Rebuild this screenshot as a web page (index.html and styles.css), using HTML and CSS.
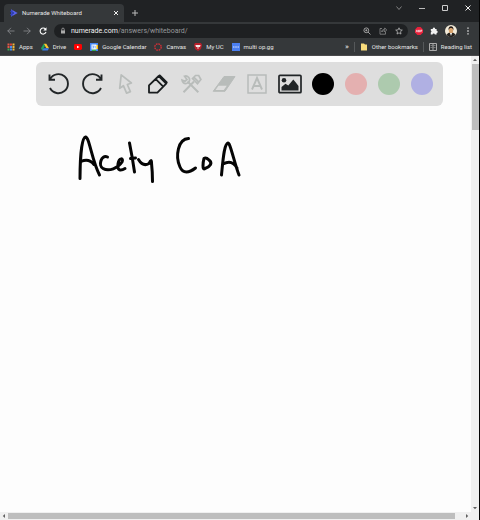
FILE: index.html
```html
<!DOCTYPE html>
<html lang="en">
<head>
<meta charset="utf-8">
<title>Numerade Whiteboard</title>
<link rel="stylesheet" href="styles.css">
</head>
<body>
<header class="browser">
  <div class="tabs">
    <div class="tab">
      <svg class="icon" viewBox="0 0 8 8"><path d="M1 .3 7.7 4 1 7.7Z" fill="#5963e8"/><path d="M0 2.2 4 4 0 5.8M2 1v6" stroke="#2b3cae" fill="none"/></svg>
      <span class="tab-title">Numerade Whiteboard</span>
      <button class="plain" aria-label="Close tab"><svg class="icon" viewBox="0 0 8 8"><path d="m2 2 4 4m0-4-4 4" stroke="#eee" fill="none"/></svg></button>
    </div>
    <button class="plain" aria-label="New tab"><svg class="icon" viewBox="0 0 8 8"><path d="M1 4h6M4 1v6" stroke="#bbb" fill="none"/></svg></button>
    <div class="window-buttons">
      <button class="plain" aria-label="Search tabs"><svg class="icon" viewBox="0 0 8 8"><path d="m1.5 2.5 2.5 3 2.5-3" stroke="#999" stroke-width=".8" fill="none"/></svg></button>
      <button class="plain" aria-label="Minimize"><svg class="icon" viewBox="0 0 8 8"><path d="M1 4.5h6" stroke="#bbb"/></svg></button>
      <button class="plain" aria-label="Maximize"><svg class="icon" viewBox="0 0 8 8"><path d="M1.500 1.500h5v5h-5z" stroke="#ccc" fill="none"/></svg></button>
      <button class="plain" aria-label="Close"><svg class="icon" viewBox="0 0 8 8"><path d="m1.500 1.500 5 5m0-5-5 5" stroke="#eee" fill="none"/></svg></button>
    </div>
  </div>
  <div class="navigation">
    <div class="nav-buttons">
      <button class="plain" aria-label="Back"><svg class="icon" viewBox="0 0 8 8"><path d="M7.500 4h-7M4 .8.8 4 4 7.200" stroke="#8b8d90" stroke-width=".8" fill="none"/></svg></button>
      <button class="plain" aria-label="Forward"><svg class="icon" viewBox="0 0 8 8"><path d="M.5 4h7M4 .8 7.200 4 4 7.200" stroke="#8b8d90" stroke-width=".8" fill="none"/></svg></button>
      <button class="plain" aria-label="Reload"><svg class="icon" viewBox="0 0 8 8"><path d="M6.500 2.200A3 3 0 1 0 7 5" stroke="#fff" stroke-width="1.100" fill="none"/><path d="M7.500.3v3.200H4.300z" fill="#fff"/></svg></button>
    </div>
    <div class="address">
      <svg class="lock" viewBox="0 0 6 8"><path d="M1 3.500h4v3H1z" fill="#aaa"/><path d="M1.800 4V2.300a1.200 1.200 0 0 1 2.400 0V4" stroke="#aaa" stroke-width=".8" fill="none"/></svg>
      <span class="url"><b>numerade.com</b>/answers/whiteboard/</span>
      <button class="plain" aria-label="Zoom"><svg class="icon" viewBox="0 0 8 8"><circle cx="3.300" cy="3.300" r="2.400" stroke="#bbb" stroke-width=".8" fill="none"/><path d="m5 5 2.500 2.500M2.300 3.300h2m-1-1v2" stroke="#bbb" stroke-width=".8"/></svg></button>
      <button class="plain" aria-label="Share"><svg class="icon" viewBox="0 0 8 8"><path d="M3 1.500H1v5.700h5.500V5M2.700 5c0-2 1.300-2.600 3-2.600V.9l2 2.100-2 2V3.700c-1.300 0-2.200.2-3 1.300Z" stroke="#999" stroke-width=".7" fill="none"/></svg></button>
      <button class="plain" aria-label="Bookmark"><svg class="icon" viewBox="0 0 8 8"><path d="m4 .8.9 2.100 2.400.2-1.800 1.600.5 2.400-2-1.300L2 7.100l.5-2.400L.7 3.100l2.400-.2Z" stroke="#ccc" stroke-width=".7" fill="none"/></svg></button>
    </div>
    <div class="extensions">
      <button class="plain" aria-label="Ad blocker"><svg class="icon" viewBox="0 0 8 8"><path d="M2.400 0h3.200L8 2.400v3.200L5.600 8H2.400L0 5.600V2.400Z" fill="#e8213b"/><path d="m1.200 5.200.7-2.300.7 2.300M3.500 3v2h1V3.200h-1M5.700 5.200V3h1v1.200h-1" stroke="#fff" stroke-width=".6" fill="none"/></svg></button>
      <button class="plain" aria-label="Extensions"><svg class="icon" viewBox="0 0 8 8"><path d="M.8 2h2a1.200 1.200 0 1 1 2.300 0h1.500v1.800a1.100 1.100 0 1 1 0 2.200v1.500H4.800a1.100 1.100 0 0 0-2.200 0H.8V5.600a1.100 1.100 0 0 0 0-2Z" fill="#f1f1f1"/></svg></button>
      <button class="plain" aria-label="Profile"><svg class="avatar" viewBox="0 0 12 12"><circle cx="6" cy="6" r="6" fill="#f2ead8"/><path d="M1.500 10.100C2.500 8 4 7.500 6 7.500s3.500.5 4.500 2.600A6 6 0 0 1 1.500 10.100Z" fill="#25221f"/><ellipse cx="6" cy="5.400" rx="2.100" ry="2.900" fill="#d9a36c"/><path d="M3.500 5.400C3.200 2.400 4.400 1.200 6 1.200s2.800 1.200 2.500 4.200C8 3.400 7 3 6 3s-2 .4-2.500 2.400Z" fill="#251b17"/><path d="m5 8 1 3 1-3Z" fill="#fff"/></svg></button>
      <button class="plain" aria-label="Menu"><svg class="icon" viewBox="0 0 8 8"><path d="M3.300.4h1.400v1.400H3.300zm0 2.900h1.400v1.400H3.300zm0 2.900h1.400v1.400H3.300z" fill="#ddd"/></svg></button>
    </div>
  </div>
  <nav class="bookmarks">
    <a href="#"><svg class="icon" viewBox="0 0 8 8"><path d="M.5.5h2v2h-2zM.5 3h2v2h-2z" fill="#e45848"/><path d="M3 .5h2v2H3z" fill="#db4437"/><path d="M5.500.5h2v2h-2zM5.500 3h2v2h-2z" fill="#f4b83c"/><path d="M3 3h2v2H3zM3 5.500h2v2H3z" fill="#4b8df0"/><path d="M.5 5.500h2v2h-2z" fill="#3ca757"/><path d="M5.500 5.500h2v2h-2z" fill="#f4b83c"/></svg>Apps</a>
    <a href="#"><svg class="icon" viewBox="0 0 8 8"><path d="M2.700.7h2.600L8 5.300H5.400Z" fill="#fbc62e"/><path d="M2.700.7 4 3 1.300 7.600 0 5.300Z" fill="#1da462"/><path d="M2.600 5.300H8L6.700 7.600H1.300Z" fill="#397be8"/></svg>Drive</a>
    <a href="#" aria-label="YouTube"><svg class="icon" viewBox="0 0 8 8"><rect y="1" width="8" height="6" rx="1.400" fill="#f00"/><path d="m3 2.700 2.500 1.300L3 5.300Z" fill="#fff"/></svg></a>
    <a href="#"><svg class="icon" viewBox="0 0 8 8"><path d="M0 0h8v8H0z" fill="#4285f4"/><path d="M6 2h2v4H6z" fill="#fbbc04"/><path d="M2 6h4v2H2z" fill="#34a853"/><path d="M1.500 1.500h5v5h-5z" fill="#fff"/><path d="M2.400 2.800h1v1h-.6.6v1.400h-1M4.500 3h.7v2.400" stroke="#4285f4" stroke-width=".6" fill="none"/></svg>Google Calendar</a>
    <a href="#"><svg class="icon" viewBox="0 0 8 8"><circle cx="4" cy="4" r="3.200" fill="none" stroke="#dc2f36" stroke-width="1.300" stroke-dasharray="1.700 .8"/></svg>Canvas</a>
    <a href="#"><svg class="icon" viewBox="0 0 8 8"><path d="M1 0h6l1 2-1 4-3 2-3-2-1-4Z" fill="#b81f2b"/><path d="M1.400 2h5.200L6 4H2Zm1.400 2.600h2.400L4 6Z" fill="#f4e6e6"/></svg>My UC</a>
    <a href="#"><svg class="icon" viewBox="0 0 8 8"><path d="M0 0h8v8H0z" fill="#4b7ff1"/><path d="M1 4h6" stroke="#dce5ff" stroke-dasharray="1.200 .4"/></svg>multi op.gg</a>
    <div class="bookmarks-end">
      <button class="plain more" aria-label="More bookmarks">»</button>
      <a class="divided" href="#"><svg class="icon" viewBox="0 0 8 8"><path d="M1 .5h3l1 1h2v6H1z" fill="#f9dc7c"/></svg>Other bookmarks</a>
      <a class="divided" href="#"><svg class="icon" viewBox="0 0 8 8"><path d="M.5.5h7v7h-7zM4 .5v7" stroke="#aaa" fill="none"/><path d="M1.500 2.500h2m-2 2h2m1-2h2m-2 2h2" stroke="#aaa" stroke-width=".6"/></svg>Reading list</a>
    </div>
  </nav>
</header>
<main class="viewport">
  <section class="board">
    <div class="tools">
      <button class="plain" aria-label="Undo"><svg class="tool" viewBox="0 0 24 24"><path d="M2.500 2.500v5.300H8M3 7.300A9.500 9.500 0 1 1 3 16" stroke="#222628" stroke-width="1.900" fill="none"/></svg></button>
      <button class="plain" aria-label="Redo"><svg class="tool" viewBox="0 0 24 24"><path d="M21.500 2.500v5.300H16M21 7.300A9.500 9.500 0 1 0 21 16" stroke="#222628" stroke-width="1.900" fill="none"/></svg></button>
      <button class="plain" aria-label="Select"><svg class="tool" viewBox="0 0 24 24"><path d="M8.200 2.800 6.700 16.300l3.700-2.600 3.200 7.400 3.800-1.500-3.100-7.100 4.100-1.500Z" stroke="#b9bdbb" stroke-width="1.700" fill="none" stroke-linejoin="round"/></svg></button>
      <button class="plain" aria-label="Pen"><svg class="tool" viewBox="0 0 24 24"><path d="m12.700 4 7.500 7.600-8.800 9H3v-7.300ZM9.800 7.200l7.400 7.400M12.700 4l1.100-.6 7 7-.6 1.200" stroke="#181c1e" stroke-width="1.800" fill="none" stroke-linejoin="round"/></svg></button>
      <button class="plain" aria-label="Shapes"><svg class="tool" viewBox="0 0 24 24"><path d="m8.500 9.500 10.800 10.800M15 9.500 4.500 20.200" stroke="#b8bcba" stroke-width="2" fill="none"/><path d="M5.500 4.200A3.800 3.800 0 1 1 3 8l3 1.200L8 7.500ZM13.500 6.500l3-3h3.200l2.200 4-3.400 4.200Zm1.300-1.300 5 5" stroke="#b8bcba" stroke-width="1.700" fill="none"/></svg></button>
      <button class="plain" aria-label="Eraser"><svg class="tool" viewBox="0 0 24 24"><path d="M12 4.500h11L13 19.300H1.200Z" fill="#b8bcba" stroke="#b8bcba" stroke-linejoin="round"/><path d="M6.500 13.800h8.300l-3 4.200H3.500Z" fill="#dedede"/></svg></button>
      <button class="plain" aria-label="Text"><svg class="tool" viewBox="0 0 24 24"><path d="M3 3h18v18H3z" stroke="#b8bcba" stroke-width="1.500" fill="none"/><path d="m7 17.500 5-11.500 5 11.500M8.800 14h6.400" stroke="#b8bcba" stroke-width="1.900" fill="none"/></svg></button>
      <button class="plain" aria-label="Image"><svg class="tool" viewBox="0 0 24 24"><rect x="1" y="3.300" width="22" height="17.400" rx="1" stroke="#202426" stroke-width="1.700" fill="none"/><circle cx="6" cy="8.200" r="2.300" fill="#202426"/><path d="M3.500 18.500V15l4-3.200 2.800 1.800 5-6 1.900 2.100 3.300 4.200v4.600Z" fill="#202426"/></svg></button>
      <button class="swatch black" aria-label="Black"></button>
      <button class="swatch red" aria-label="Red"></button>
      <button class="swatch green" aria-label="Green"></button>
      <button class="swatch blue" aria-label="Blue"></button>
    </div>
    <svg class="drawing" viewBox="70 125 180 70" role="img" aria-label="Acety CoA">
      <path d="M80 178.500C80 165 81 138 85.500 137C89 136 92 161 99.500 175M81 161.500Q89 158 94 164.500M107.500 157C101 154 98 166 103 168.500C109 172 118 168 122 162C124 158 119 157 118 164C117 171 121 171 125 168.500M129.500 143Q132.500 158 134.500 172M130.500 158.500l5-.5M138.500 159.500Q143 167 149 163.500Q151.500 158 151.500 163Q152.500 172 152.500 181.500M188.500 138.500C178 139 175 156 180 167C183 174 189 173 195.500 168M204 158.500C203 162 202 171 205 168.500C210 167 213 163 209 160Q206 157 204 158.500M221.500 175C223 160 224 144 228 143C230 142 235 165 239 175M223 164Q232 159 237 168"/>
    </svg>
  </section>
  <div class="scroll vertical"><i class="arrow up"></i><i class="thumb"></i><i class="arrow down"></i></div>
  <div class="scroll horizontal"><i class="arrow left"></i><i class="thumb"></i><i class="arrow right"></i></div>
</main>
</body>
</html>
```
FILE: styles.css
```css
* { box-sizing: border-box; }
body {
  margin: 0;
  min-height: 100vh;
  display: flex;
  flex-direction: column;
  border-right: 1px solid #050505;
  background: #fdfdfd;
  font-family: Roboto, "Open Sans", sans-serif;
  font-size: 6px;
  line-height: 10px;
  color: #e6e6e6;
}
svg { display: block; flex: none; }
a { color: inherit; text-decoration: none; }
.plain { padding: 0; border: 0; background: none; color: inherit; font: inherit; }
.icon { width: 8px; height: 8px; }
.browser { background: #35383a; border-bottom: 1px solid #4a4a4c; }
.tabs {
  height: 22px;
  display: flex;
  align-items: center;
  gap: 7px;
  padding: 4px 0 0 4px;
  background: #202224;
}
.tab {
  width: 120px;
  height: 18px;
  display: flex;
  align-items: center;
  gap: 4px;
  padding: 0 4px 0 6px;
  border-radius: 4px 4px 0 0;
  background: #35383a;
}
.tab-title { flex: 1; }
.window-buttons { display: flex; gap: 15px; margin: -11px 7px 0 auto; }
.navigation { height: 17px; display: flex; align-items: center; }
.nav-buttons { width: 54px; display: flex; gap: 8px; padding-left: 7px; }
.address {
  flex: 1;
  height: 14px;
  display: flex;
  align-items: center;
  gap: 8px;
  padding: 0 5px 0 6px;
  border-radius: 7px;
  background: #1e2022;
  font-size: 7px;
}
.lock { width: 6px; height: 8px; }
.url { flex: 1; margin-left: -3px; color: #96989a; }
.url b { font-weight: 400; color: #f2f2f2; }
.extensions { display: flex; align-items: center; gap: 7px; padding: 0 7px; }
.avatar { width: 12px; height: 12px; }
.bookmarks { height: 16px; display: flex; align-items: center; gap: 8px; padding: 0 7px; }
.bookmarks a { display: flex; align-items: center; gap: 4px; white-space: nowrap; }
.bookmarks-end { display: flex; align-items: center; gap: 5px; margin-left: auto; }
.more { font-size: 8px; }
.bookmarks .divided { padding-left: 5px; border-left: 1px solid #55585a; }
.viewport {
  flex: 1;
  display: grid;
  grid-template: 1fr 8px / 1fr 8px;
}
.board { padding: 6px 28px 0 36px; }
.tools {
  height: 44px;
  display: grid;
  grid-template-columns: repeat(12, 1fr);
  place-items: center;
  padding: 0 5px 0 6px;
  border-radius: 6px;
  background: #dedede;
}
.tool { width: 24px; height: 24px; }
.swatch { width: 22px; height: 22px; padding: 0; border: 0; border-radius: 50%; }
.black { background: #000; }
.red { background: #e4b0b0; }
.green { background: #adcaae; }
.blue { background: #b0b0e3; }
.drawing {
  width: 180px;
  height: 70px;
  margin: 19px 0 0 34px;
  fill: none;
  stroke: #050505;
  stroke-width: 3;
  stroke-linecap: round;
  stroke-linejoin: round;
}
.scroll { display: flex; align-items: center; background: #f0f0f0; }
.vertical { flex-direction: column; }
.horizontal { grid-column: 1 / -1; padding-right: 8px; }
.thumb { background: #bebebe; }
.vertical .thumb { width: 7px; height: 66px; margin-bottom: auto; }
.horizontal .thumb { flex: 1; height: 6px; margin-right: 8px; }
.arrow { width: 8px; height: 8px; flex: none; border: 2px solid transparent; }
.arrow::before { content: ""; display: block; width: 4px; height: 4px; background: #606060; }
.up::before { clip-path: polygon(0 75%, 50% 20%, 100% 75%); }
.down::before { clip-path: polygon(0 25%, 50% 80%, 100% 25%); }
.left::before { clip-path: polygon(75% 0, 20% 50%, 75% 100%); }
.right::before { clip-path: polygon(25% 0, 80% 50%, 25% 100%); }
```
